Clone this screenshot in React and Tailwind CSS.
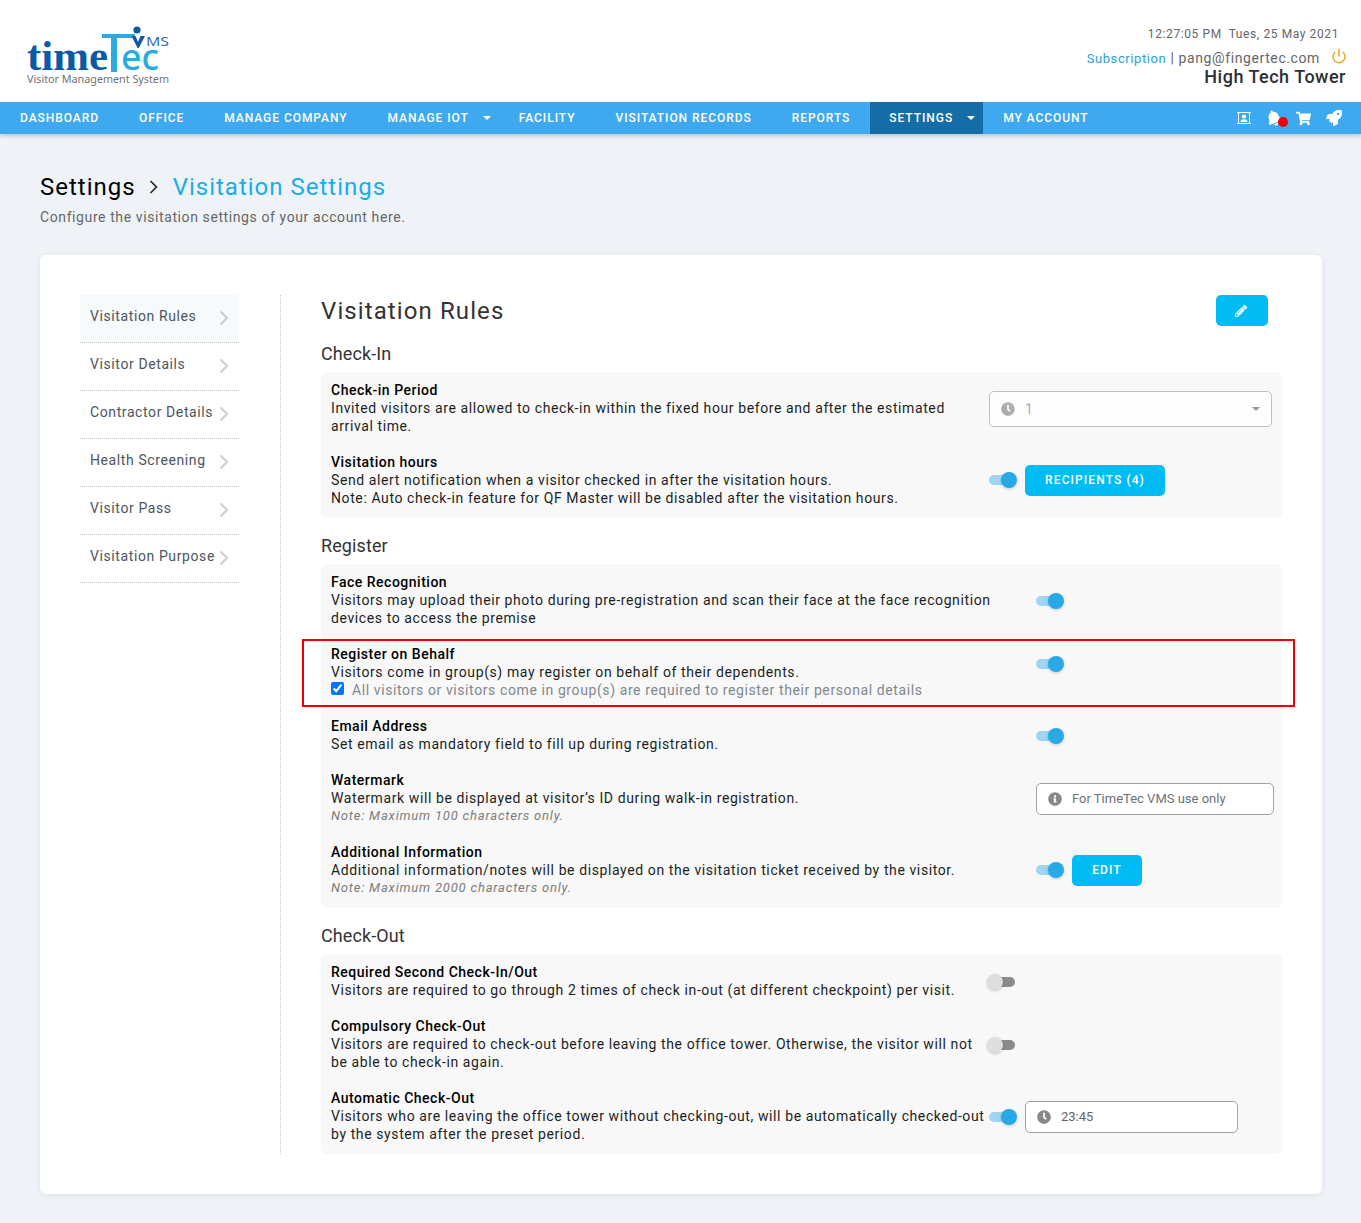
import React from "react";
import { FaClock, FaInfoCircle, FaPencilAlt, FaShoppingCart, FaRocket, FaBell } from "react-icons/fa";
import { Power } from "lucide-react";

function Logo() {
  return (
    <svg width="150" height="66" viewBox="0 0 150 66" className="block">
      <text x="0" y="46" textLength="81" lengthAdjust="spacingAndGlyphs" fontFamily="'Liberation Serif', serif" fontWeight="700" fontSize="42" fill="#0b5aa6">time</text>
      <path d="M75 10H108V14H90V48H84V14H75Z" fill="#29abe2" />
      <text x="94" y="46" textLength="38" lengthAdjust="spacingAndGlyphs" fontFamily="'Noto Sans', sans-serif" fontWeight="500" fontSize="37" fill="#29abe2">ec</text>
      <circle cx="110" cy="6" r="3.6" fill="#0b5aa6" />
      <path d="M104.5 12L108.5 12L111 18L113.5 12L118 12L111.8 24H110.6Z" fill="#0b5aa6" />
      <text x="119" y="22" fontFamily="'Noto Sans', sans-serif" fontSize="12.5" fill="#2f6fb3" textLength="23" lengthAdjust="spacingAndGlyphs">MS</text>
      <text x="0" y="59" textLength="142" lengthAdjust="spacingAndGlyphs" fontFamily="'Noto Sans', sans-serif" fontSize="11.5" fill="#6f7174">Visitor Management System</text>
    </svg>
  );
}

function Caret() {
  return <span className="ml-[14px] w-0 h-0 border-x-[4px] border-x-transparent border-t-[4px] border-t-white" />;
}

function NavItem({ children, caret, active }) {
  return (
    <div className={`flex items-center h-full pl-5 ${caret ? "pr-[8px]" : "pr-5"} ${active ? "bg-[#156da8] pl-[19px]" : ""}`}>
      <span>{children}</span>
      {caret && <Caret />}
    </div>
  );
}

function Toggle({ on = true, className = "" }) {
  return (
    <div className={`relative w-[28px] h-[16px] shrink-0 ${className}`}>
      <div className={`absolute left-0 top-[3px] w-[26px] h-[10px] rounded-full ${on ? "bg-[#9dd5f3]" : "bg-[#8b8b8b]"}`} />
      <div className={`absolute top-0 w-[16px] h-[16px] rounded-full shadow-[0_1px_3px_rgba(0,0,0,0.2)] ${on ? "right-0 bg-[#28a9e6]" : "left-[-2px] bg-[#dedede]"}`} />
    </div>
  );
}

function Row({ title, lines, note, w, children, align = "items-center", extra, outline }) {
  return (
    <div className={`relative flex ${align}`}>
      <div className="shrink-0" style={{ width: w }}>
        <div className="font-medium text-black tracking-[0.5px]">{title}</div>
        {lines.map((l) => <div key={l}>{l}</div>)}
        {extra}
        {note && <div className="italic text-[13px] tracking-[0.8px] text-[#7d7d7d]">{note}</div>}
      </div>
      {children}
      {outline && <div className="absolute left-[-29px] right-[-23px] top-[-6px] bottom-[-8px] border-2 border-[#f00000] pointer-events-none" />}
    </div>
  );
}

function Panel({ children }) {
  return <div className="flex flex-col gap-[18px] bg-[#f8f8f8] rounded-[6px] pl-[10px] pr-[10px] pt-[9px] pb-[11px]">{children}</div>;
}

function Heading({ children, first }) {
  return <div className={`h-[24px] leading-[25px] mb-[7px] text-[18px] tracking-[0.1px] text-[#333] ${first ? "" : "mt-[15px]"}`}>{children}</div>;
}

function Btn({ children, className = "" }) {
  return (
    <div className={`h-[31px] flex items-center justify-center rounded-[5px] bg-[#00bcf5] text-white text-[12px] font-medium tracking-[1.1px] ${className}`}>{children}</div>
  );
}

function Side({ label, active }) {
  return (
    <div className={`relative h-[48px] flex pl-[10px] pt-[11px] border-b border-dotted border-[#c4c4c4] text-[14px] leading-[20px] text-[#4d555e] ${active ? "bg-[#f6fafb]" : ""}`}>
      {label}
      <svg width="10" height="16" viewBox="0 0 10 16" className="absolute left-[139px] top-[15px]"><path d="M1.5 1.5L8 8L1.5 14.5" fill="none" stroke="#c9cbcd" strokeWidth="2" /></svg>
    </div>
  );
}

export default function App() {
  return (
    <div className="min-h-screen bg-[#eff3f8] tracking-[0.6px] text-[14px] leading-[18px] text-[#1c1f23]" style={{ fontFamily: "Roboto, sans-serif" }}>
      <header className="relative h-[102px] bg-white flex justify-between">
        <div className="pl-[27px] pt-[24px] tracking-normal"><Logo /></div>
        <div className="flex flex-col items-end pr-[15px] pt-[25px]">
          <div className="text-[12px] leading-[18px] text-[#666] pr-[7px]">12:27:05 PM&nbsp; Tues, 25 May 2021</div>
          <div className="flex items-center mt-[6px] h-[18px] text-[14px]">
            <span className="text-[13px] text-[#2a9fd8] mt-[1px]">Subscription</span>
            <span className="text-[#666]">&nbsp;| pang@fingertec.com</span>
            <Power size={16} strokeWidth={2.2} className="text-[#f5a623] ml-[11px] mt-[-5px] mr-[-1px]" />
          </div>
          <div className="text-[18px] leading-[20px] font-medium text-[#2c2f36] tracking-[0.5px] mt-[0px]">High Tech Tower</div>
        </div>
      </header>

      <nav className="relative h-[32px] bg-[#3ea9ee] text-white text-[12px] font-medium tracking-[0.95px] flex items-center shadow-[0_2px_4px_rgba(0,0,0,0.2)]">
        <NavItem>DASHBOARD</NavItem>
        <NavItem>OFFICE</NavItem>
        <NavItem>MANAGE COMPANY</NavItem>
        <NavItem caret>MANAGE IOT</NavItem>
        <NavItem>FACILITY</NavItem>
        <NavItem>VISITATION RECORDS</NavItem>
        <NavItem>REPORTS</NavItem>
        <NavItem caret active>SETTINGS</NavItem>
        <NavItem>MY ACCOUNT</NavItem>
        <div className="ml-auto flex items-center pr-[19px]">
          <svg width="14" height="14" viewBox="0 0 14 14" className="mr-[15px]">
            <rect x="1.5" y="1.5" width="11" height="11" fill="none" stroke="#fff" strokeWidth="1" />
            <path d="M0 1.5H3M11 1.5H14M0 12.5H3M11 12.5H14" stroke="#fff" strokeWidth="1" />
            <circle cx="7" cy="5.5" r="2.1" fill="#fff" />
            <path d="M3.5 11C3.7 8.8 5 8.2 7 8.2S10.3 8.8 10.5 11Z" fill="#fff" />
          </svg>
          <div className="relative mr-[14px]">
            <FaBell size={16} className="text-white -rotate-[20deg]" />
            <div className="absolute left-[12px] top-[7px] w-[10px] h-[10px] rounded-full bg-[#f40000]" />
          </div>
          <FaShoppingCart size={15} className="text-white mr-[15px]" />
          <FaRocket size={16} className="text-white" />
        </div>
      </nav>

      <main className="pl-[40px] pr-[39px] pt-[37px] pb-[29px]">
        <div className="flex items-center h-[32px] text-[24px] leading-[32px] text-black">
          <span className="tracking-[1px]">Settings</span>
          <svg width="10" height="14" viewBox="0 0 10 14" className="ml-[13px] mr-[14px]"><path d="M1.5 1L7.5 7L1.5 13" fill="none" stroke="#222" strokeWidth="1.6" /></svg>
          <span className="text-[#17aee9] tracking-[1px]">Visitation Settings</span>
        </div>
        <div className="mt-[4px] h-[20px] leading-[20px] text-[14px] text-[#666]">Configure the visitation settings of your account here.</div>

        <div className="mt-[28px] bg-white rounded-[6px] p-[40px] flex shadow-[0_1px_6px_rgba(0,0,0,0.08)]">
          <aside className="w-[159px] shrink-0">
            <Side label="Visitation Rules" active />
            <Side label="Visitor Details" />
            <Side label="Contractor Details" />
            <Side label="Health Screening" />
            <Side label="Visitor Pass" />
            <Side label="Visitation Purpose" />
          </aside>
          <section className="ml-[41px] pl-[40px] flex-1 border-l border-dotted border-[#c4c4c4]">
            <div className="h-[46px] flex justify-between items-start pr-[14px]">
              <div className="text-[24px] leading-[32px] text-[#333] tracking-[1.1px]">Visitation Rules</div>
              <Btn className="w-[52px]"><FaPencilAlt size={12} className="mr-[2px]" /></Btn>
            </div>

            <Heading first>Check-In</Heading>
            <Panel>
              <Row w={658} title="Check-in Period" lines={["Invited visitors are allowed to check-in within the fixed hour before and after the estimated", "arrival time."]}>
                <div className="w-[283px] h-[36px] mt-[2px] rounded-[5px] border border-[#b9c1c6] bg-[#fdfdfd] flex items-center pl-[11px] pr-[11px] text-[#aaa]">
                  <FaClock size={14} className="text-[#adadad]" />
                  <span className="ml-[10px]">1</span>
                  <span className="ml-auto w-0 h-0 border-x-[4px] border-x-transparent border-t-[4px] border-t-[#999]" />
                </div>
              </Row>
              <Row w={658} title="Visitation hours" lines={["Send alert notification when a visitor checked in after the visitation hours.", "Note: Auto check-in feature for QF Master will be disabled after the visitation hours."]}>
                <Toggle />
                <Btn className="ml-[8px] w-[140px]">RECIPIENTS (4)</Btn>
              </Row>
            </Panel>

            <Heading>Register</Heading>
            <Panel>
              <Row w={705} title="Face Recognition" lines={["Visitors may upload their photo during pre-registration and scan their face at the face recognition", "devices to access the premise"]}>
                <Toggle className="mt-[2px]" />
              </Row>
              <Row w={705} align="items-start" outline title="Register on Behalf" lines={["Visitors come in group(s) may register on behalf of their dependents."]}
                extra={
                  <div className="flex items-center text-[#808890]">
                    <input type="checkbox" defaultChecked className="w-[13px] h-[13px] m-0 mb-[3px]" />
                    <span className="ml-[8px]">All visitors or visitors come in group(s) are required to register their personal details</span>
                  </div>
                }>
                <Toggle className="mt-[11px]" />
              </Row>
              <Row w={705} title="Email Address" lines={["Set email as mandatory field to fill up during registration."]}>
                <Toggle className="mt-[2px]" />
              </Row>
              <Row w={705} title="Watermark" lines={["Watermark will be displayed at visitor’s ID during walk-in registration."]} note="Note: Maximum 100 characters only.">
                <div className="w-[238px] h-[32px] mt-[2px] rounded-[5px] border border-[#9aa5aa] bg-white flex items-center pl-[11px] text-[13px] tracking-normal text-[#6b7278] mr-[-8px]">
                  <FaInfoCircle size={14} className="text-[#888]" />
                  <span className="ml-[10px]">For TimeTec VMS use only</span>
                </div>
              </Row>
              <Row w={705} title="Additional Information" lines={["Additional information/notes will be displayed on the visitation ticket received by the visitor."]} note="Note: Maximum 2000 characters only.">
                <Toggle />
                <Btn className="ml-[8px] w-[70px]">EDIT</Btn>
              </Row>
            </Panel>

            <Heading>Check-Out</Heading>
            <Panel>
              <Row w={658} title="Required Second Check-In/Out" lines={["Visitors are required to go through 2 times of check in-out (at different checkpoint) per visit."]}>
                <Toggle on={false} className="mt-[2px]" />
              </Row>
              <Row w={658} title="Compulsory Check-Out" lines={["Visitors are required to check-out before leaving the office tower. Otherwise, the visitor will not", "be able to check-in again."]}>
                <Toggle on={false} className="mt-[2px]" />
              </Row>
              <Row w={658} title="Automatic Check-Out" lines={["Visitors who are leaving the office tower without checking-out, will be automatically checked-out", "by the system after the preset period."]}>
                <Toggle className="mt-[2px]" />
                <div className="ml-[8px] w-[213px] h-[32px] mt-[2px] rounded-[5px] border border-[#9aa5aa] bg-white flex items-center pl-[11px] text-[13px] tracking-normal text-[#666]">
                  <FaClock size={14} className="text-[#888]" />
                  <span className="ml-[10px]">23:45</span>
                </div>
              </Row>
            </Panel>
          </section>
        </div>
      </main>
    </div>
  );
}
